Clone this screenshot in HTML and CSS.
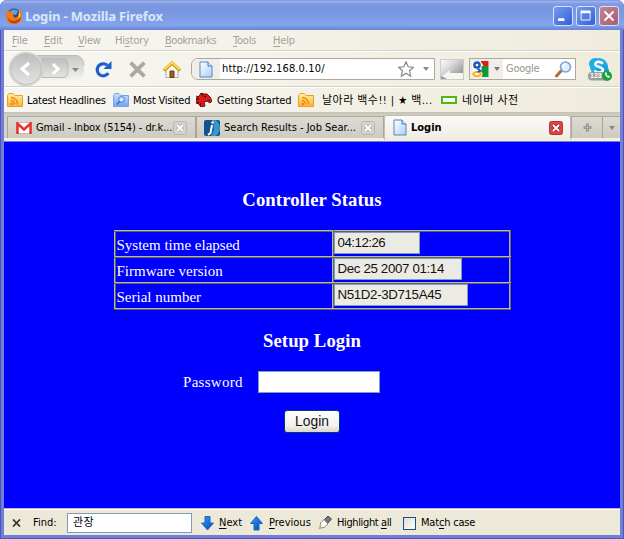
FILE: index.html
```html
<!DOCTYPE html>
<html lang="en">
<head>
<meta charset="utf-8">
<title>Login - Mozilla Firefox</title>
<link rel="stylesheet" href="styles.css">
</head>
<body>
<svg class="defs" width="0" height="0" aria-hidden="true">
  <defs>
    <linearGradient id="page" x1="0" y1="0" x2="1" y2="1"><stop offset="0" stop-color="#fff"/><stop offset="1" stop-color="#a9d0fa"/></linearGradient>
    <linearGradient id="gold" x1="0" y1="0" x2="0" y2="1"><stop offset="0" stop-color="#fff0a0"/><stop offset="1" stop-color="#f8b537"/></linearGradient>
    <linearGradient id="sky" x1="0" y1="0" x2="0" y2="1"><stop offset="0" stop-color="#c9e0ff"/><stop offset="1" stop-color="#72a3ec"/></linearGradient>
    <linearGradient id="arrow" x1="0" y1="0" x2="1" y2="1"><stop offset="0" stop-color="#3d9aee"/><stop offset="1" stop-color="#0646b4"/></linearGradient>
    <linearGradient id="silver" x1="0" y1="0" x2="0" y2="1"><stop offset="0" stop-color="#bebebe"/><stop offset="1" stop-color="#e4e4e2"/></linearGradient>
    <linearGradient id="pill" x1="0" y1="0" x2="0" y2="1"><stop offset="0" stop-color="#c8c8c4"/><stop offset="1" stop-color="#f4f4ee"/></linearGradient>
    <linearGradient id="steel" x1="0" y1="0" x2="1" y2="1"><stop offset="0" stop-color="#fff"/><stop offset=".35" stop-color="#ddd"/><stop offset="1" stop-color="#777"/></linearGradient>
    <symbol id="doc" viewBox="0 0 14 17"><path d="M1 1h8l4 4v11H1z" fill="url(#page)" stroke="#5d83c4"/><path d="M9 1v4h4" fill="#dcecff" stroke="#3f74c4"/></symbol>
    <symbol id="rss" viewBox="0 0 16 14"><path d="M.5 13.500V2.500L2 .5h4l2 2h7.500v11z" fill="url(#gold)" stroke="#e9a020"/><path d="M4 4.500a6.500 6.500 0 0 1 6.500 7M4 7.500a3.500 3.500 0 0 1 3.500 4" fill="none" stroke="#f28a1a" stroke-width="1.500"/><circle cx="4.700" cy="11" r="1.200" fill="#f07c10"/></symbol>
  </defs>
</svg>
<div class="window">
  <header class="titlebar">
    <svg class="fox" viewBox="0 0 16 16"><circle cx="8" cy="7.500" r="7" fill="#1d4f9c"/><path d="M4 3q4-3 8 0l-2 4-5-1z" fill="#5fa3dc"/><path d="M1 2l2 1.500L5 3.300 6 5l2.500.5L7 7.300l1 2q2 1 4-1l1-4-1-3q4 3 4 7a8 8 0 0 1-16 .5Q0 5 1 2z" fill="#ef7a10"/><path d="M1.500 9q4 6 10 3l3.500-4q0 7-7 7.500-5 0-6.500-6.500z" fill="#c63c0a"/><path d="M13 3q3 5-.5 8l.5-5z" fill="#ffce3c"/></svg>
    <h1 class="title">Login - Mozilla Firefox</h1>
    <div class="controls">
      <span class="control"><svg viewBox="0 0 20 20"><path d="M4.500 14h7" stroke="#fff" stroke-width="3"/></svg></span>
      <span class="control"><svg viewBox="0 0 20 20"><path d="M4.500 5.500h10v9h-10z" fill="none" stroke="#fff"/><path d="M4 5.500h11" stroke="#fff" stroke-width="3"/></svg></span>
      <span class="control close"><svg viewBox="0 0 20 20"><path d="M5 5l10 10M15 5L5 15" stroke="#fff" stroke-width="2"/></svg></span>
    </div>
  </header>
  <nav class="menubar">
    <span class="m-file"><u>F</u>ile</span><span class="m-edit"><u>E</u>dit</span><span class="m-view"><u>V</u>iew</span><span class="m-history">Hi<u>s</u>tory</span><span class="m-bookmarks"><u>B</u>ookmarks</span><span class="m-tools"><u>T</u>ools</span><span class="m-help"><u>H</u>elp</span>
  </nav>
  <div class="toolbar">
    <svg class="history" viewBox="0 0 78 32"><path d="M18 3h52q8 0 8 12t-8 12H18z" fill="url(#pill)"/><path d="M18 2.500h52q7 0 8 10" fill="none" stroke="#bbb"/><path d="M36 5.500h22q4 0 4 10t-4 9H36z" fill="url(#silver)" stroke="#bbb"/><circle cx="20" cy="16" r="15.500" fill="url(#silver)" stroke="#bbb"/><circle cx="20" cy="16" r="16.500" fill="none" stroke="#d4d4d0" stroke-width="1.500"/><path d="M23 10l-7 6 7 6" fill="none" stroke="#fff" stroke-width="3"/><path d="M47 11l5 5-5 5" fill="none" stroke="#fff" stroke-width="3"/><path d="M66 15h7l-3.500 4z" fill="#888"/></svg>
    <svg class="reload" viewBox="0 0 16 16"><path d="M12.500 11.500A5.700 5.700 0 1 1 11.500 4" fill="none" stroke="#1b5fce" stroke-width="3"/><path d="M15.500 0v7.500H8z" fill="#1b5fce"/></svg>
    <svg class="stop" viewBox="0 0 16 16"><path d="M1.500 1.500l13 13M14.500 1.500l-13 13" stroke="#aaa9a4" stroke-width="3.600"/></svg>
    <svg class="home" viewBox="0 0 18 17"><path d="M3 8l6-6 6 6v8.500H3z" fill="#f8f8f3" stroke="#aaa"/><path d="M1 9.500L9 2l8 7.500" fill="none" stroke="#cf920c" stroke-width="3.200"/><path d="M1.300 8.500L9 1.500l7.700 7" fill="none" stroke="#ffd850" stroke-width="2"/><path d="M7 10h4v6.500H7z" fill="#a85a18" stroke="#6e3b12"/></svg>
    <div class="address">
      <span class="identity"><svg class="doc"><use href="#doc"/></svg></span>
      <span class="url">http://192.168.0.10/</span>
      <svg class="star" viewBox="0 0 16 16"><path d="M8 .8l2.200 5 5.300.5-4 3.500 1.200 5.400L8 12.300l-4.700 2.900 1.200-5.400-4-3.500 5.300-.5z" fill="#fff" stroke="#888" stroke-width="1.200"/></svg>
      <svg class="caret" viewBox="0 0 6 4"><path d="M0 0h6L3 4z" fill="#888"/></svg>
    </div>
    <svg class="metal" viewBox="0 0 24 21"><path d="M0 0h24v21H0z" fill="url(#steel)"/><path d="M2 17l8-6v3h13v7H8z" fill="#f7f7f0"/><path d="M1 20V17l8 4z" fill="#999"/><path d="M.5.500h23v20H.5z" fill="none" stroke="#ccc"/></svg>
    <div class="search">
      <span class="engine"><svg viewBox="0 0 16 16"><path d="M0 0h16v16H0z" fill="#fff"/><path d="M8 0h8v5h-5z" fill="#e31b17"/><path d="M9 5h7v11H9q2-3 0-5z" fill="#109838"/><ellipse cx="4.500" cy="13" rx="3.600" ry="2" fill="#fff" stroke="#fbb31a" stroke-width="2.200"/><ellipse cx="4.500" cy="4" rx="2.600" ry="2.600" fill="#fff" stroke="#1d58bd" stroke-width="2.500"/><path d="M5 7.500l3 2.500-3 1" fill="none" stroke="#1d58bd" stroke-width="1.800"/></svg><svg class="caret" viewBox="0 0 6 4"><path d="M0 0h6L3 4z" fill="#777"/></svg></span>
      <span class="hint">Google</span>
      <svg class="lens" viewBox="0 0 17 17"><path d="M6 10l-4.500 5" stroke="#b26d37" stroke-width="3" stroke-linecap="round"/><circle cx="10.500" cy="6" r="5" fill="#d8f0ff" stroke="#7aa2db" stroke-width="1.600"/><path d="M8 6q0-3 3-3" fill="none" stroke="#fff" stroke-width="1.500"/></svg>
    </div>
    <div class="skype">
      <svg viewBox="0 0 24 24"><circle cx="7" cy="7" r="6" fill="#23a9e8"/><circle cx="11" cy="10" r="9" fill="#20aeea"/><circle cx="15" cy="14" r="6" fill="#169fdf"/><path d="M15 6.500q-4-3-7-1-2 3 2 4t5 3q0 3-4 3-3 0-4.500-2" fill="none" stroke="#fff" stroke-width="2.400"/><rect y="15" width="20" height="8.500" rx="4" fill="#9a9d9c"/><circle cx="19" cy="19" r="5" fill="#17a23a"/><path d="M17 16q0 4 4 5l1-1.500-1.500-1-1 .5-1-1.500.5-1-1-1.500z" fill="#fff"/></svg>
      <span>123</span>
    </div>
  </div>
  <div class="bookmarks">
    <svg class="folder"><use href="#rss"/></svg><span class="b-latest">Latest Headlines</span>
    <svg class="folder" viewBox="0 0 16 14"><path d="M.5 13.500V2.500L2 .5h4l2 2h7.500v11z" fill="url(#sky)" stroke="#7ba4e7"/><circle cx="8.500" cy="6.500" r="2.800" fill="#d6e7ff" stroke="#3970c4"/><path d="M6.500 8.500L4 11.500" stroke="#3970c4" stroke-width="1.500"/></svg><span class="b-most">Most Visited</span>
    <svg class="dino" viewBox="0 0 16 14"><path d="M2 4l2-2 1-2 3 1 3 0 3 3 2 4-2 2-3-2-3 1 1 4-4 1-2-3-3-1 1-2-2-2z" fill="#e51a14" stroke="#641010"/><path d="M0 3l2 1M0 6h3M1 10l2-1M4 13l1-3M5 0l2 3" stroke="#220b0b"/><path d="M8 3h2v1H8zM12 7l2 1" fill="#111" stroke="#111" stroke-width=".6"/></svg><span class="b-getting">Getting Started</span>
    <svg class="folder"><use href="#rss"/></svg><span class="b-nal ko">날아라 백수!! | ★ 백...</span>
    <i class="naver"></i><span class="b-naver ko">네이버 사전</span>
  </div>
  <div class="tabs">
    <div class="tab tab-mail"><svg class="gmail" viewBox="0 0 16 12"><path d="M.5.500h15v11H.5z" fill="#fff" stroke="#dcb0ad"/><path d="M1.500 12V1.500L8 7.500l6.500-6V12" fill="none" stroke="#df3533" stroke-width="2.500"/></svg><span class="label">Gmail - Inbox (5154) - dr.k...</span><svg class="x" viewBox="0 0 14 14"><rect x=".5" y=".5" width="13" height="13" rx="2" fill="#d4d2cb" stroke="#b8b6ae"/><path d="M4 4l6 6M10 4l-6 6" stroke="#aaa" stroke-width="3.500"/><path d="M4 4l6 6M10 4l-6 6" stroke="#fff" stroke-width="1.800"/></svg></div>
    <div class="tab tab-jobs"><svg class="jobs" viewBox="0 0 16 16"><rect width="16" height="16" rx="2" fill="#11538c"/><path d="M8 0h4q4 4 4 8t-4 8H7q5-7 1-16z" fill="#3897c4"/><path d="M8 5L6.500 13 4 15" fill="none" stroke="#fff" stroke-width="2"/><circle cx="8.500" cy="2.500" r="1.200" fill="#fff"/></svg><span class="label">Search Results - Job Sear...</span><svg class="x" viewBox="0 0 14 14"><rect x=".5" y=".5" width="13" height="13" rx="2" fill="#d4d2cb" stroke="#b8b6ae"/><path d="M4 4l6 6M10 4l-6 6" stroke="#aaa" stroke-width="3.500"/><path d="M4 4l6 6M10 4l-6 6" stroke="#fff" stroke-width="1.800"/></svg></div>
    <div class="tab tab-login"><svg class="doc"><use href="#doc"/></svg><span class="label">Login</span><svg class="x" viewBox="0 0 14 14"><rect x=".5" y=".5" width="13" height="13" rx="2" fill="#dc4547" stroke="#b82e32"/><path d="M4 4l6 6M10 4l-6 6" stroke="#a22026" stroke-width="3.800"/><path d="M4 4l6 6M10 4l-6 6" stroke="#fff" stroke-width="2"/></svg></div>
    <div class="tab tab-new"><svg viewBox="0 0 9 9"><path d="M4.500.500v8M.5 4.500h8" stroke="#8b8a86" stroke-width="2.600"/><path d="M4.500 1.500v6M1.500 4.500h6" stroke="#b5b3ac"/></svg></div>
    <div class="tab tab-list"><svg class="caret" viewBox="0 0 6 4"><path d="M0 0h6L3 4z" fill="#888"/></svg></div>
  </div>
  <main class="content">
    <h2 class="status-heading">Controller Status</h2>
    <table class="status">
      <tr><td class="name"><span class="n-time">System time elapsed</span></td><td><div class="value v-time">04:12:26</div></td></tr>
      <tr><td class="name"><span class="n-firmware">Firmware version</span></td><td><div class="value v-firmware">Dec 25 2007 01:14</div></td></tr>
      <tr><td class="name"><span class="n-serial">Serial number</span></td><td><div class="value v-serial">N51D2-3D715A45</div></td></tr>
    </table>
    <h2 class="login-heading">Setup Login</h2>
    <form class="login">
      <div class="field"><label for="pw">Password</label><input id="pw" type="password"></div>
      <button type="button"><span>Login</span></button>
    </form>
  </main>
  <footer class="findbar">
    <svg class="dismiss" viewBox="0 0 9 8"><path d="M1 .5l7 7M8 .5l-7 7" stroke="#303030" stroke-width="1.700"/></svg>
    <span class="f-find">Find:</span>
    <div class="query ko">관장</div>
    <svg class="dir" viewBox="0 0 13 15"><path d="M4 .5h5v6.500h3.500l-6 7-6-7H4z" fill="url(#arrow)" stroke="#1768cb"/></svg>
    <span class="f-next"><u>N</u>ext</span>
    <svg class="dir" viewBox="0 0 13 15"><path d="M4 14h5V7.500h3.500l-6-7-6 7H4z" fill="url(#arrow)" stroke="#1768cb"/></svg>
    <span class="f-prev"><u>P</u>revious</span>
    <svg class="pen" viewBox="0 0 14 14"><path d="M6 4l4-4 3.500 3L9 8z" fill="#777" stroke="#444"/><path d="M2.500 7L6 3.500 10 8l-4 3.500-4 .5z" fill="#fff" stroke="#888"/><path d="M1 11.500l2.500-.5-1 2.500L.5 13z" fill="#f5a62e"/></svg>
    <span class="f-high">Highlight <u>a</u>ll</span>
    <i class="check"></i>
    <span class="f-match">Mat<u>c</u>h case</span>
  </footer>
</div>
</body>
</html>
```
FILE: styles.css
```css
* { box-sizing: border-box; }
body { margin: 0; background: #fff; overflow: hidden; }
.defs { position: absolute; }
svg { display: block; flex: none; }
u { text-underline-offset: 2px; text-decoration-thickness: 1px; }
span { white-space: nowrap; }

.window {
  width: 624px; height: 539px; padding: 0 4px 4px; overflow: hidden;
  display: flex; flex-direction: column;
  background: #707ed8; border-radius: 7px 7px 0 0;
  box-shadow: inset 1px -1px #4e55b9, inset -1px 0 #4e55b9;
  font: 11px/14px "DejaVu Sans Condensed", "DejaVu Sans", sans-serif; color: #000;
}
.ko { font-family: "DejaVu Sans Condensed", "Noto Sans CJK KR", sans-serif; }

.titlebar {
  height: 30px; flex: none; margin: 0 -4px; padding: 1px 5px 0 6px;
  display: flex; align-items: center;
  background: linear-gradient(#6685dc 0, #9db6ee 1px, #8099df 4px, #7896e0 10px, #7f9ee7 20px, #83a5eb 25px, #758ede 28px, #6d7fd5);
}
.fox { width: 16px; height: 16px; }
.title { flex: 1; margin: 1px 0 0 3px; font: bold 13px/18px "Noto Sans", sans-serif; color: #dce6fb; white-space: nowrap; letter-spacing: -.14px; }
.controls { display: flex; gap: 3px; padding-top: 1px; }
.control { width: 20px; height: 20px; border: 1px solid #d6e1fa; border-radius: 3px; background: linear-gradient(135deg, #789bed, #315fdc); }
.control svg { width: 18px; height: 18px; }
.control.close { background: linear-gradient(135deg, #c48490, #a65e72); }

.menubar { height: 21px; flex: none; padding: 4px 8px 0; display: flex; background: linear-gradient(90deg, #f6f5f1, #efecde); border-bottom: 1px solid #d5d2c3; color: #a5a297; letter-spacing: -.2px; }
.m-file { width: 32px; } .m-edit { width: 34px; } .m-view { width: 37px; } .m-history { width: 50px; }
.m-bookmarks { width: 68px; letter-spacing: -.45px; }
.m-tools { width: 40px; }

.toolbar { height: 36px; flex: none; padding-left: 2px; display: flex; align-items: center; background: linear-gradient(90deg, #f7f6f2, #efecdd); border-top: 1px solid #fff; border-bottom: 1px solid #d5d2c3; }
.history { width: 78px; height: 32px; overflow: visible; }
.reload { width: 17px; height: 17px; margin-left: 11px; }
.stop { width: 17px; height: 17px; margin-left: 17px; }
.home { width: 18px; height: 17px; margin-left: 17px; }
.address { width: 244px; height: 22px; margin-left: 10px; display: flex; align-items: center; background: #fff; border: 1px solid #aaa99f; border-radius: 7px 0 0 7px; overflow: hidden; }
.identity { width: 28px; height: 20px; flex: none; display: grid; place-items: center; background: #efeee9; }
.doc { width: 14px; height: 17px; }
.url { flex: 1; margin-left: 2px; letter-spacing: .15px; }
.star { width: 16px; height: 16px; }
.caret { width: 6px; height: 4px; }
.address .caret { margin: 0 5px 0 9px; }
.metal { width: 24px; height: 21px; margin-left: 5px; }
.search { width: 107px; height: 22px; margin-left: 5px; padding-right: 3px; display: flex; align-items: center; background: #fff; border: 1px solid #aaa99f; }
.engine { width: 33px; height: 20px; flex: none; padding-left: 2px; display: flex; align-items: center; gap: 5px; background: #efeee8; }
.engine > svg:first-child { width: 17px; height: 16px; }
.hint { flex: 1; margin-left: 3px; color: #99968c; letter-spacing: -.25px; }
.lens { width: 17px; height: 17px; }
.skype { width: 24px; height: 24px; margin-left: 12px; display: grid; }
.skype > * { grid-area: 1 / 1; }
.skype svg { width: 24px; height: 24px; }
.skype span { align-self: end; padding: 0 0 1px 2px; font: bold 7px/8px "Liberation Sans", sans-serif; color: #fff; }

.bookmarks { height: 25px; flex: none; padding-left: 3px; display: flex; align-items: center; background: linear-gradient(90deg, #f7f6f2, #efebdc); border-top: 1px solid #fff; }
.folder, .dino { width: 16px; height: 14px; }
.bookmarks span { margin: 1px 0 0 4px; flex: none; }
.b-latest { width: 86px; letter-spacing: -.25px; }
.b-most { width: 63px; letter-spacing: -.25px; }
.bookmarks .b-getting { width: 81px; margin-left: 5px; letter-spacing: -.14px; }
.bookmarks .b-nal { width: 119px; margin-left: 8px; letter-spacing: .45px; }
.naver { width: 16px; height: 8px; background: #fff; border: 2px solid #4fb813; }
.bookmarks .b-naver { margin-left: 5px; letter-spacing: .5px; }

.tabs { height: 30px; flex: none; padding: 4px 0 4px 3px; display: flex; background: linear-gradient(#c6c3b6 0, #d5d2c7 5px, #d5d2c7 25px, #aaa89e 25px, #f2efe3 26px, #f2efe3 29px, #8080c0 29px); overflow: hidden; }
.tab { flex: none; height: 22px; display: flex; align-items: center; background: linear-gradient(#dcdad3, #cecbc1); border: 1px solid #a9a69c; border-bottom: 0; }
.tab .label { width: 0; flex: 1; margin-left: 4px; }
.x { width: 14px; height: 14px; }
.tab-mail { width: 189px; padding: 0 8px 0 8px; }
.tab-mail .label { letter-spacing: -.1px; }
.gmail { width: 16px; height: 12px; }
.tab-jobs { width: 188px; padding: 0 8px 0 7px; }
.jobs { width: 16px; height: 16px; }
.tab-login { width: 187px; height: 25px; margin-top: -1px; padding: 0 7px 1px 8px; background: linear-gradient(#fbfaf7, #efece1); border-color: #c2bfb3; border-radius: 3px 3px 0 0; font-weight: bold; }
.tab-login .label { margin-left: 4px; }
.tab-new { width: 32px; justify-content: center; }
.tab-new svg { width: 9px; height: 9px; }
.tab-list { width: 17px; justify-content: center; border-left: 0; border-right: 0; }

.content { height: 366px; flex: none; background: #00f; color: #fff; font: 16px/19px "Liberation Serif", serif; display: flex; flex-direction: column; align-items: center; overflow: hidden; }
.content h2 { margin: 0; font-size: 18.700px; line-height: 22px; white-space: nowrap; letter-spacing: .08px; }
.content .status-heading { margin-top: 47px; }
.content .login-heading { margin-top: 20px; }
.status { width: 397px; height: 80px; margin-top: 19px; border-collapse: collapse; border: 2px ridge #b9b8ad; }
.status td { height: 26px; padding: 0; border: 2px ridge #b9b8ad; vertical-align: top; }
.status .name { width: 218px; padding: 4px 0 0 1px; font-size: 15px; }
.value { height: 22px; padding: 0 0 0 3px; border: 1px solid #7f9db9; background: #ebebe4; color: #111; font: 13.300px/20px "Liberation Sans", sans-serif; white-space: nowrap; letter-spacing: -.35px; }
.v-time { width: 86px; letter-spacing: -.5px; } .v-firmware { width: 128px; } .v-serial { width: 134px; }
.login { width: 260px; margin-top: 19px; display: flex; flex-direction: column; align-items: center; }
.field { display: flex; align-items: center; align-self: flex-start; }
.field label { width: 75px; margin-left: 1px; font-size: 15px; letter-spacing: .3px; }
.field input { width: 122px; height: 22px; padding: 0; border: 1px solid #7f9db9; background: #fff; }
.login button { width: 56px; height: 23px; margin-top: 17px; padding: 0; border: 1px solid #003c74; border-radius: 3px; background: linear-gradient(#fff, #f2f1ec 70%, #d9d5c9); color: #111; font: 13.800px/20px "Liberation Sans", sans-serif; }

.findbar { height: 27px; flex: none; padding: 2px 0 0 8px; display: flex; align-items: center; background: #ece9d8; border-top: 1px solid #b9b8c9; box-shadow: inset 0 1px #fff; }
.dismiss { width: 9px; height: 8px; }
.f-find { width: 34px; margin-left: 12px; }
.query { width: 125px; height: 20px; padding: 0 5px; border: 1px solid #7f9db9; background: #fff; line-height: 17px; letter-spacing: .5px; }
.dir { width: 13px; height: 15px; }
.query + .dir { margin-left: 9px; }
.f-next { width: 31px; margin-left: 5px; }
.f-prev { width: 49px; margin-left: 6px; }
.pen { width: 14px; height: 14px; }
.f-high { width: 66px; margin-left: 5px; letter-spacing: -.38px; }
.check { width: 13px; height: 13px; background: linear-gradient(135deg, #dedcd4, #fff); border: 1px solid #1c5180; }
.f-match { margin-left: 5px; letter-spacing: -.2px; }
```
